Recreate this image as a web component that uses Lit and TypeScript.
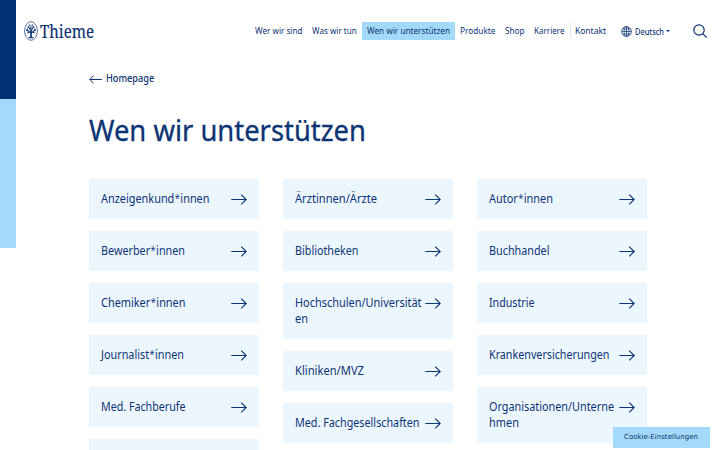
import { LitElement, html, css, svg } from "lit";
import { customElement, property } from "lit/decorators.js";

/** A line of text condensed or widened to a given measure. */
@customElement("fit-text")
class FitText extends LitElement {
  @property() text = "";
  @property({ type: Number }) measure = 0;

  static styles = css`
    :host { display: block; white-space: nowrap; flex: none; }
    .ink { display: inline-block; transform-origin: 0 50%; white-space: pre; }
    .star { position: relative; top: -0.1em; margin: 0 0.05em; font-size: 0.85em; line-height: 0; }
  `;

  updated() {
    const ink = this.renderRoot.querySelector(".ink") as HTMLElement;
    ink.style.transform = "none";
    const natural = ink.getBoundingClientRect().width;
    this.style.width = `${this.measure}px`;
    ink.style.transform = `scaleX(${this.measure / natural})`;
  }

  render() {
    const [head, tail] = this.text.split("*");
    return html`<span class="ink">${head}${tail ? html`<span class="star">*</span>${tail}` : ""}</span>`;
  }
}

type Line = [string, number];

const columns: Line[][][] = [
  [
    [["Anzeigenkund*innen", 108.5]],
    [["Bewerber*innen", 84]],
    [["Chemiker*innen", 84.5]],
    [["Journalist*innen", 83]],
    [["Med. Fachberufe", 84.5]],
    [],
  ],
  [
    [["Ärztinnen/Ärzte", 82]],
    [["Bibliotheken", 63.5]],
    [["Hochschulen/Universität", 126.5], ["en", 13]],
    [["Kliniken/MVZ", 69]],
    [["Med. Fachgesellschaften", 124.5]],
  ],
  [
    [["Autor*innen", 64]],
    [["Buchhandel", 60.5]],
    [["Industrie", 45.5]],
    [["Krankenversicherungen", 120.5]],
    [["Organisationen/Unterne", 125], ["hmen", 30]],
  ],
];

const nav: { text: string; w: number; active?: boolean; split?: boolean }[] = [
  { text: "Wer wir sind", w: 47.5 },
  { text: "Was wir tun", w: 44.8 },
  { text: "Wen wir unterstützen", w: 83 },
  { text: "Produkte", w: 35.5 },
  { text: "Shop", w: 19.4 },
  { text: "Karriere", w: 30.5 },
  { text: "Kontakt", w: 31, split: true },
];
nav[2].active = true;

const arrowRight = svg`<path d="M0.3 5.5H15.2M10.2 0.6L15.2 5.5L10.2 10.4"/>`;
const arrowLeft = svg`<path d="M12.8 4.5H0.8M4.6 0.6L0.8 4.5L4.6 8.4"/>`;

@customElement("app-root")
class AppRoot extends LitElement {
  static styles = css`
    :host {
      display: flex;
      position: relative;
      width: 720px;
      height: 450px;
      overflow: hidden;
      background: #fff;
      color: #0d3473;
      font-family: "Noto Sans", "Open Sans", sans-serif;
    }
    svg { display: block; fill: none; stroke: #0d3473; flex: none; }
    .rail { width: 16px; flex: none; }
    .dark { height: 99px; background: #003274; }
    .light { height: 148.5px; background: #a4daf9; }
    .page { flex: 1; min-width: 0; }
    header { display: flex; align-items: center; height: 62px; padding-left: 8px; box-sizing: border-box; }
    .brand { display: flex; align-items: center; width: 225.5px; gap: 2px; }
    .brand fit-text { font: 17.2px/24px "Noto Serif", "Liberation Serif", serif; -webkit-text-stroke: 0.2px #0d3473; margin-top: 1px; }
    nav { display: flex; align-items: center; font-size: 9px; line-height: 18px; }
    .item { padding: 0 5px; height: 18px; }
    .active { background: #a4daf9; padding: 0 4.9px; }
    .split { border-left: 1px solid #e4ecf4; padding-left: 4.2px; }
    .lang { display: flex; align-items: center; gap: 2.6px; margin-left: 10.2px; font-weight: 500; font-size: 8.2px; }
    .caret { margin-left: -0.5px; border: 2.1px solid transparent; border-top-color: #0d3473; border-bottom: 0; }
    .search { margin-left: 22.5px; }
    main { padding-left: 73px; }
    .back { display: flex; align-items: center; gap: 4px; height: 16px; margin-top: 8px; font-size: 10.8px; line-height: 16px; font-weight: 500; }
    .back svg { margin-top: 2px; }
    .back fit-text { margin-top: -1px; }
    h1 { margin: 23px 0 0; height: 42px; font-size: 28.4px; line-height: 42px; font-weight: 400; -webkit-text-stroke: 0.3px #0d3473; }
    .columns { display: flex; gap: 24px; margin-top: 28.4px; }
    .column { display: flex; flex-direction: column; gap: 12px; width: 170px; }
    .card { display: flex; justify-content: space-between; background: #ecf6fe; padding: 12px; line-height: 16px; font-size: 12.6px; }
    .lines { width: 128px; }
    .card svg { margin-top: 2.6px; }
    .cookie {
      position: absolute; left: 612.5px; top: 427px; width: 97.5px; height: 20.5px;
      display: flex; align-items: center; justify-content: center;
      background: #a4daf9; font: 500 7px/12px "DejaVu Sans", sans-serif;
    }
  `;

  render() {
    return html`
      <div class="rail"><div class="dark"></div><div class="light"></div></div>
      <div class="page">
        <header>
          <div class="brand">
            <svg width="14" height="20" viewBox="0 0 14 20" stroke-width="0.7">
              <ellipse cx="7" cy="10" rx="6.4" ry="9.3" />
              <path stroke-width="1.7" d="M7 9.5V16" />
              <path stroke-width="1.1" d="M4.6 16.6H9.4M7 12L3 9.2M7 12L11 9.2M7 10L4.6 6M7 10L9.4 6M2.4 9.8L3.6 7.6M11.6 9.8L10.4 7.6M3.6 6.4L5.4 5.2M10.4 6.4L8.6 5.2M5.2 3.6L6.4 4.6M8.8 3.6L7.6 4.6M7 5.6V8M3.4 12L5 11.2M10.6 12L9 11.2" />
            </svg>
            <fit-text text="Thieme" .measure=${54}></fit-text>
          </div>
          <nav>
            ${nav.map(
              (n) => html`<div class="item ${n.active ? "active" : ""} ${n.split ? "split" : ""}">
                <fit-text .text=${n.text} .measure=${n.w}></fit-text>
              </div>`
            )}
          </nav>
          <div class="lang">
            <svg width="11" height="11" viewBox="0 0 11 11" stroke-width="0.75">
              <circle cx="5.5" cy="5.5" r="4.9" />
              <ellipse cx="5.5" cy="5.5" rx="2.4" ry="4.9" />
              <path d="M5.5 0.6V10.4M0.6 5.5H10.4M1.4 3H9.6M1.4 8H9.6" />
            </svg>
            <fit-text text="Deutsch" .measure=${29}></fit-text>
            <div class="caret"></div>
          </div>
          <svg class="search" width="14" height="14" viewBox="0 0 14 14" stroke-width="1.2">
            <circle cx="6" cy="6" r="5.2" />
            <path d="M9.7 9.7L13.5 13.5" />
          </svg>
        </header>
        <main>
          <div class="back">
            <svg width="13" height="9" viewBox="0 0 13 9" stroke-width="1">${arrowLeft}</svg>
            <fit-text text="Homepage" .measure=${48.2}></fit-text>
          </div>
          <h1><fit-text text="Wen wir unterstützen" .measure=${277}></fit-text></h1>
          <div class="columns">
            ${columns.map(
              (cards) => html`<div class="column">
                ${cards.map(
                  (lines) => html`<div class="card">
                    <div class="lines">
                      ${lines.map(([t, w]) => html`<fit-text .text=${t} .measure=${w}></fit-text>`)}
                    </div>
                    <svg width="16" height="11" viewBox="0 0 16 11" stroke-width="1.1">${arrowRight}</svg>
                  </div>`
                )}
              </div>`
            )}
          </div>
        </main>
      </div>
      <div class="cookie"><fit-text text="Cookie-Einstellungen" .measure=${74}></fit-text></div>
    `;
  }
}
